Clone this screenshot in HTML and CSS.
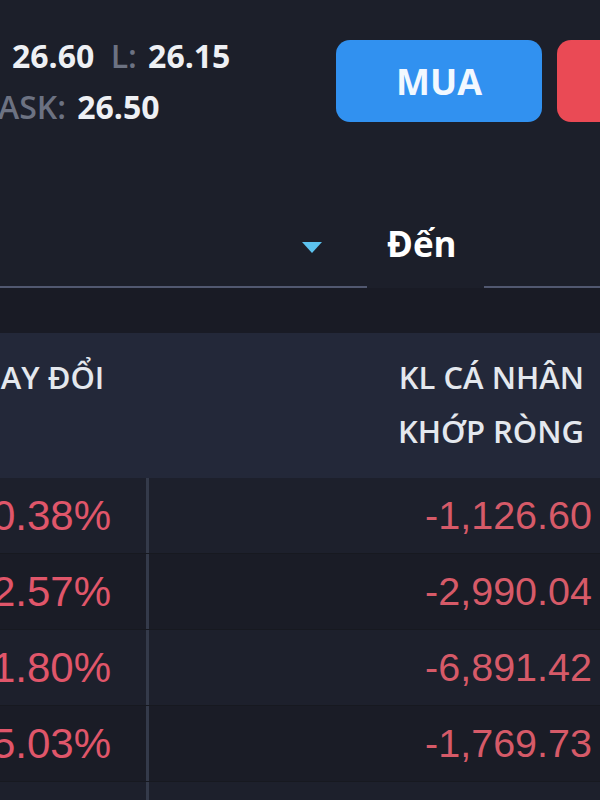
FILE: index.html
```html
<!DOCTYPE html>
<html lang="vi">
<head>
    <meta charset="UTF-8">
    <meta name="viewport" content="width=device-width, initial-scale=1.0">
    <title>Giao dịch</title>
    <link rel="stylesheet" href="styles.css">
</head>
<body>
    <div class="top">
        <div class="quote">
            <div class="quote-line">
                <span class="val">26.60</span>
                <span class="lbl">L:</span>
                <span class="val">26.15</span>
            </div>
            <div class="quote-line ask">
                <span class="lbl">ASK:</span>
                <span class="val">26.50</span>
            </div>
        </div>
        <div class="actions">
            <button class="btn buy">MUA</button>
            <button class="btn sell">BÁN</button>
        </div>
    </div>

    <div class="filter">
        <div class="field from">
            <span class="caret"></span>
        </div>
        <div class="field-label">Đến</div>
        <div class="field to"></div>
    </div>

    <div class="spacer"></div>

    <div class="table">
        <div class="head">
            <div class="cell left">THAY ĐỔI</div>
            <div class="cell right">KL CÁ NHÂN<br>KHỚP RÒNG</div>
        </div>
        <div class="row">
            <div class="cell left neg">-0.38%</div>
            <div class="cell right neg">-1,126.60</div>
        </div>
        <div class="row alt">
            <div class="cell left neg">-2.57%</div>
            <div class="cell right neg">-2,990.04</div>
        </div>
        <div class="row">
            <div class="cell left neg">-1.80%</div>
            <div class="cell right neg">-6,891.42</div>
        </div>
        <div class="row alt">
            <div class="cell left neg">-5.03%</div>
            <div class="cell right neg">-1,769.73</div>
        </div>
        <div class="row">
            <div class="cell left neg">-0.58%</div>
            <div class="cell right pos">1,204.15</div>
        </div>
    </div>
</body>
</html>
```

FILE: styles.css
```css
body {
    margin: 0;
    padding: 0;
    background-color: #1c1f2a;
    font-family: "Open Sans", Arial, sans-serif;
    color: #eef0f4;
    width: 600px;
    height: 800px;
    overflow: hidden;
}
.top {
    display: flex;
    align-items: center;
    padding: 30px 0 0 12px;
}
.quote-line {
    height: 51px;
    line-height: 51px;
    font-size: 32px;
    font-weight: 700;
    white-space: nowrap;
}
.quote-line.ask {
    margin-left: -14px;
}
.quote-line .lbl {
    color: #6c7282;
    font-weight: 600;
    margin: 0 3px 0 8px;
}
.quote-line.ask .lbl {
    margin-left: 0;
}
.actions {
    display: flex;
    gap: 15px;
    margin-left: auto;
    margin-right: -163px;
}
.btn {
    width: 206px;
    height: 82px;
    border: none;
    border-radius: 14px;
    color: #f2f8ff;
    font-family: "Open Sans", Arial, sans-serif;
    font-size: 36px;
    font-weight: 700;
    cursor: pointer;
}
.buy {
    background: #3191f0;
}
.sell {
    background: #ea4a55;
}
.filter {
    display: flex;
    margin-top: 84px;
}
.field {
    height: 72px;
    box-sizing: border-box;
    border-bottom: 2px solid #515870;
    display: flex;
    align-items: center;
    padding-bottom: 16px;
}
.field.from {
    width: 367px;
    justify-content: flex-end;
    padding-right: 45px;
}
.field.to {
    flex: 1;
}
.caret {
    width: 0;
    height: 0;
    border-left: 10px solid transparent;
    border-right: 10px solid transparent;
    border-top: 11px solid #5cc2ee;
    margin-top: 8px;
}
.field-label {
    width: 117px;
    box-sizing: border-box;
    padding: 0 0 18px 20px;
    height: 72px;
    display: flex;
    align-items: center;
    font-size: 35px;
    font-weight: 700;
    color: #ffffff;
}
.spacer {
    height: 45px;
    background: #191b25;
}
.table {
    margin-left: -40px;
}
.head,
.row {
    display: grid;
    grid-template-columns: 189px 1fr;
}
.head {
    background: #232839;
    height: 145px;
    box-sizing: border-box;
    padding-top: 17px;
    font-size: 31px;
    font-weight: 600;
    line-height: 54px;
    color: #e4e8ee;
}
.head .left {
    text-align: right;
    padding-right: 48px;
    white-space: nowrap;
}
.head .right {
    text-align: right;
    padding-right: 16px;
}
.row {
    height: 76px;
    background: #1d202c;
    border-bottom: 1px solid #171920;
    box-sizing: border-box;
    font-family: "Liberation Sans", Arial, sans-serif;
}
.row.alt {
    background: #1a1c26;
}
.row .cell {
    display: flex;
    align-items: center;
    justify-content: flex-end;
    white-space: nowrap;
}
.row .left {
    font-size: 42px;
    padding-right: 38px;
    box-shadow: inset -3px 0 0 #343a4a;
}
.row .right {
    font-size: 39.5px;
    padding-right: 8px;
}
.neg {
    color: #e0566a;
}
.row .right.neg {
    color: #d65a68;
}
.pos {
    color: #3fbf8a;
}
```
